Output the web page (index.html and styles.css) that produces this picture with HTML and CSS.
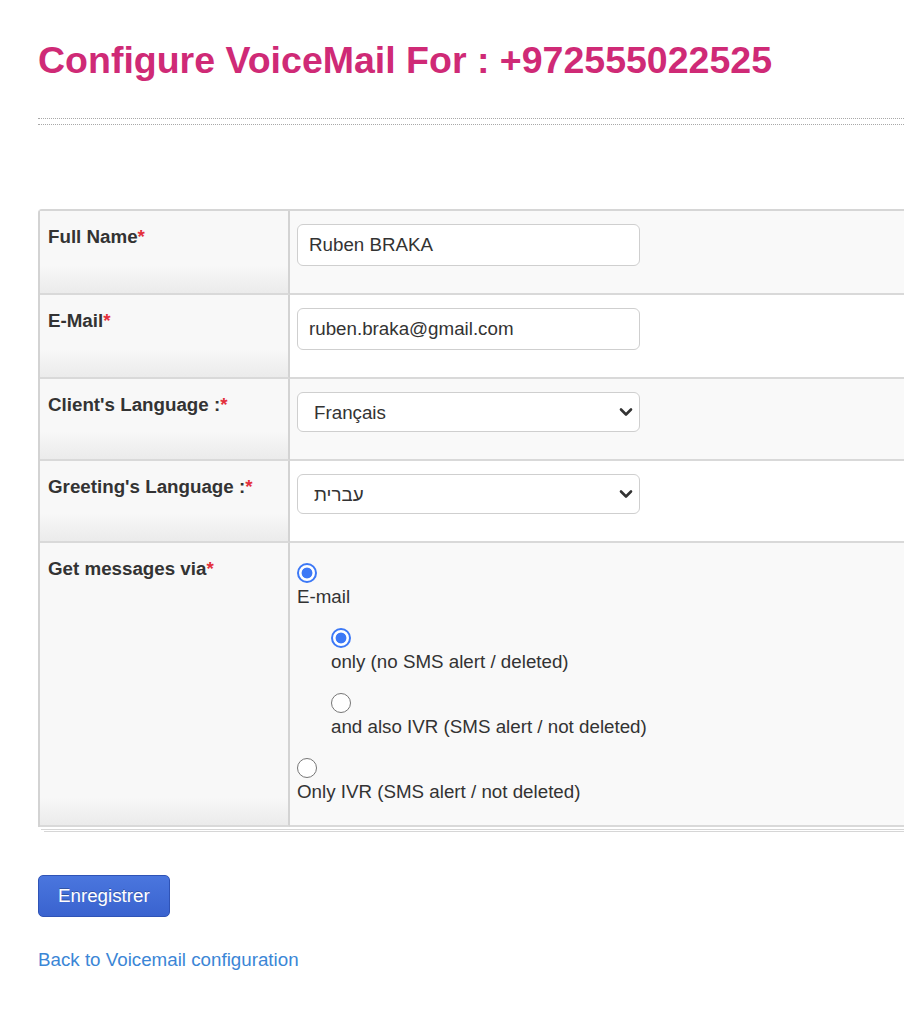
FILE: index.html
```html
<!DOCTYPE html>
<html lang="en">
<head>
<meta charset="utf-8">
<title>Configure VoiceMail</title>
<link rel="stylesheet" href="styles.css">
</head>
<body>
<div class="page">
  <h1 class="title">Configure VoiceMail For : +972555022525</h1>
  <div class="divider"></div>

  <table class="form-table">
    <tr class="row-odd">
      <td class="label">Full Name<span class="req">*</span></td>
      <td class="field"><input class="text-input" type="text" value="Ruben BRAKA"></td>
    </tr>
    <tr class="row-even">
      <td class="label">E-Mail<span class="req">*</span></td>
      <td class="field"><input class="text-input" type="text" value="ruben.braka@gmail.com"></td>
    </tr>
    <tr class="row-odd">
      <td class="label">Client's Language :<span class="req">*</span></td>
      <td class="field">
        <div class="select">
          <select><option>Français</option><option>English</option></select>
          <svg class="chev" width="14" height="10" viewBox="0 0 14 10"><path d="M2 2.5 L7 7.5 L12 2.5" fill="none" stroke="#333" stroke-width="2.6" stroke-linecap="round" stroke-linejoin="round"/></svg>
        </div>
      </td>
    </tr>
    <tr class="row-even">
      <td class="label">Greeting's Language :<span class="req">*</span></td>
      <td class="field">
        <div class="select">
          <select><option>עברית</option><option>English</option></select>
          <svg class="chev" width="14" height="10" viewBox="0 0 14 10"><path d="M2 2.5 L7 7.5 L12 2.5" fill="none" stroke="#333" stroke-width="2.6" stroke-linecap="round" stroke-linejoin="round"/></svg>
        </div>
      </td>
    </tr>
    <tr class="row-odd">
      <td class="label">Get messages via<span class="req">*</span></td>
      <td class="field radios">
        <label class="opt"><input type="radio" name="via" checked><span>E-mail</span></label>
        <div class="nested">
          <label class="opt"><input type="radio" name="mail" checked><span>only (no SMS alert / deleted)</span></label>
          <label class="opt"><input type="radio" name="mail"><span>and also IVR (SMS alert / not deleted)</span></label>
        </div>
        <label class="opt"><input type="radio" name="via"><span>Only IVR (SMS alert / not deleted)</span></label>
      </td>
    </tr>
  </table>

  <button class="btn" type="button">Enregistrer</button>
  <a class="back" href="#">Back to Voicemail configuration</a>
</div>
</body>
</html>
```

FILE: styles.css
```css
html, body {
  margin: 0;
  padding: 0;
  background: #fff;
  overflow: hidden;
}

body {
  font-family: "Liberation Sans", Arial, sans-serif;
  font-size: 18.75px;
  color: #333;
}

.page {
  padding: 39px 0 0 38px;
}

.title {
  margin: 0;
  font-size: 37.5px;
  font-weight: bold;
  line-height: 42px;
  color: #cf2a76;
}

.divider {
  margin-top: 37px;
  width: 870px;
  height: 5px;
  border-top: 1px dotted #a8a8a8;
  border-bottom: 1px dotted #a8a8a8;
}

.form-table {
  margin-top: 84px;
  width: 900px;
  border-collapse: separate;
  border-spacing: 0;
  border-top: 2px solid #d6d6d6;
  border-left: 2px solid #d3d3d3;
  border-top-left-radius: 4px;
  box-shadow: 2px 3px 0 -1px #fff, 2px 4px 0 -1px #d6d6d6, 4px 6px 0 -2px #fff, 4px 7px 0 -2px #d6d6d6;
}

.form-table td {
  vertical-align: top;
  border-bottom: 2px solid #d9d9d9;
  padding: 13px 7px 27px;
}

.form-table td.label {
  box-sizing: border-box;
  width: 250px;
  padding: 15px 8px 27px;
  line-height: 22px;
  font-weight: bold;
  color: #333;
  border-right: 2px solid #d3d3d3;
  background: linear-gradient(to bottom, #f8f8f8 0, #f8f8f8 calc(100% - 28px), #ebebeb 100%);
}

.req {
  color: #e3303c;
}

.row-odd td.field {
  background: #f9f9f9;
}

.row-even td.field {
  background: #fff;
}

.text-input {
  display: block;
  box-sizing: border-box;
  width: 343px;
  height: 42px;
  margin: 0;
  padding: 0 11px;
  border: 1px solid #cfcfcf;
  border-radius: 6px;
  background: #fff;
  font-family: inherit;
  font-size: 18.75px;
  color: #333;
  outline: none;
}

.select {
  display: flex;
  align-items: center;
  box-sizing: border-box;
  width: 343px;
  height: 40px;
  border: 1px solid #cfcfcf;
  border-radius: 6px;
  background: #fff;
}

.select select {
  flex: 1;
  height: 100%;
  appearance: none;
  -webkit-appearance: none;
  border: 0;
  background: transparent;
  padding: 0 0 0 16px;
  font-family: inherit;
  font-size: 18.75px;
  color: #333;
  outline: none;
}

.chev {
  margin-right: 6px;
  pointer-events: none;
}

.form-table td.radios {
  padding-top: 20px;
  padding-bottom: 22px;
}

.opt {
  display: block;
  line-height: 22px;
  color: #333;
}

.opt + .opt,
.nested,
.nested + .opt {
  margin-top: 20px;
}

.nested {
  margin-left: 34px;
}

.opt input {
  display: block;
  appearance: none;
  -webkit-appearance: none;
  box-sizing: border-box;
  width: 20px;
  height: 20px;
  margin: 0 0 3px 0;
  border: 1.5px solid #767676;
  border-radius: 50%;
  background: #fff;
}

.opt input:checked {
  border: 2px solid #3c78f6;
  background: radial-gradient(circle, #3c78f6 0, #3c78f6 5px, #fff 5.8px);
}

.opt span {
  display: block;
}

.btn {
  display: block;
  margin-top: 48px;
  height: 42px;
  padding: 0 19px;
  border: 1px solid #2f53b6;
  border-radius: 5px;
  background: linear-gradient(to bottom, #4a76de 0, #3a63cf 100%);
  color: #fff;
  font-family: inherit;
  font-size: 18.75px;
  text-shadow: 0 -1px 0 rgba(0, 0, 0, 0.25);
  cursor: pointer;
}

.back {
  display: inline-block;
  margin-top: 32px;
  line-height: 22px;
  color: #3b86d6;
  text-decoration: none;
}
```
